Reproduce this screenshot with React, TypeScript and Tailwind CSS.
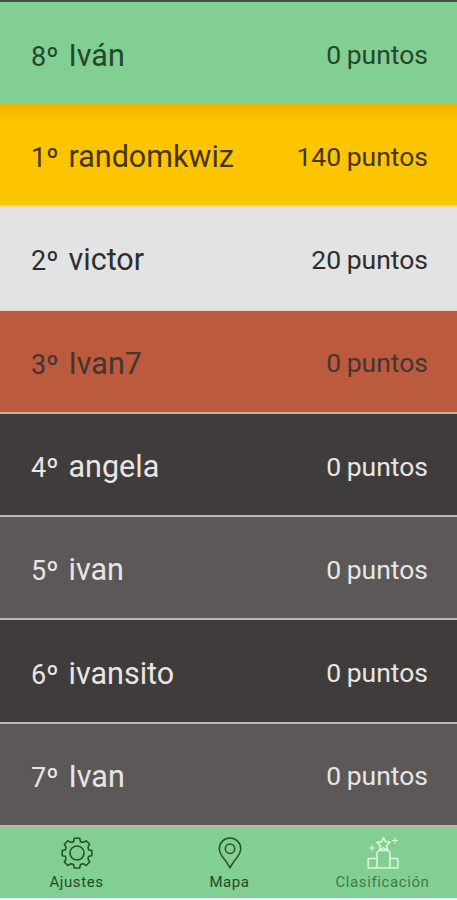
import React from 'react';
import clsx from 'clsx';

interface Player {
  rank: number;
  name: string;
  points: number;
  rowClass: string;
}

const CURRENT_PLAYER: Player = {
  rank: 8,
  name: 'Iván',
  points: 0,
  rowClass: 'bg-[#82cf93] text-[#26472b]',
};

const PLAYERS: Player[] = [
  {
    rank: 1,
    name: 'randomkwiz',
    points: 140,
    rowClass: 'border-b-[#f0dfa0] bg-[#fdc500] bg-linear-to-b from-[#eeb400] to-[#fdc500] to-20% text-[#473511]',
  },
  { rank: 2, name: 'victor', points: 20, rowClass: 'border-b-[#edd8d0] bg-[#e3e3e3] text-[#2e2e2e]' },
  { rank: 3, name: 'Ivan7', points: 0, rowClass: 'border-b-[#cdaea4] bg-[#bb5a3c] text-[#443532]' },
  { rank: 4, name: 'angela', points: 0, rowClass: 'border-b-[#bdb8b7] bg-[#403c3b] text-[#e8e6e5]' },
  { rank: 5, name: 'ivan', points: 0, rowClass: 'border-b-[#bdb8b7] bg-[#5c5857] text-[#e8e6e5]' },
  { rank: 6, name: 'ivansito', points: 0, rowClass: 'border-b-[#bdb8b7] bg-[#403c3b] text-[#e8e6e5]' },
  { rank: 7, name: 'Ivan', points: 0, rowClass: 'border-b-[#bdb8b7] bg-[#5c5857] text-[#e8e6e5]' },
];

/* ----------------------------------
   Icons
----------------------------------- */

const GearIcon = () => (
  <svg width="32" height="32" viewBox="0 0 32 32" fill="none" stroke="#26522f" strokeWidth="1.6" strokeLinejoin="round">
    <path d="M13.3 1.2h5.4l.7 3.3q1.800 1.200 3.600.6l2.200-1.400 3.500 3.500-1.400 2.300q-.6 1.800.4 3.400l3.100.6v5.200l-3.100.6q-1 1.600-.4 3.400l1.400 2.300-3.500 3.500-2.200-1.400q-1.800-.6-3.600.6l-.7 3.300h-5.400l-.7-3.300q-1.800-1.200-3.600-.6l-2.200 1.400-3.500-3.500 1.400-2.300q.6-1.800-.4-3.400l-3.100-.6v-5.200l3.100-.6q1-1.600.4-3.400L3.300 7.200l3.500-3.500L9 5.100q1.800.6 3.600-.6z" />
    <circle cx="16" cy="16" r="7" />
  </svg>
);

const PinIcon = () => (
  <svg width="24" height="32" viewBox="0 0 24 32" fill="none" stroke="#26522f" strokeWidth="1.5" strokeLinejoin="round">
    <path d="M12 31Q10.5 27.5 5 20.5 1.3 15.5 1.3 11.500a10.700 10.400 0 0 1 21.400 0Q22.7 15.5 19 20.5 13.5 27.5 12 31z" />
    <circle cx="12" cy="11.7" r="4.7" />
  </svg>
);

const PodiumIcon = () => (
  <svg width="32" height="32" viewBox="0 0 32 32" fill="none" stroke="#e0f8e1" strokeWidth="1.5" strokeLinejoin="round">
    <path d="M10 31V15.500l2-2h9l2 2V31M10 21.500H1.200V31h29.600v-9.500H23" />
    <path d="M16.500.8l2 4 4.700.5-3.500 3.200.9 4.700-4.100-2.300-4.100 2.300.9-4.700-3.500-3.200 4.700-.5z" />
    <path strokeWidth="1.1" d="M5 8v6M2 11h6M28 .5v6M25 3.500h6" />
  </svg>
);

/* ----------------------------------
   Components
----------------------------------- */

const PlayerRow: React.FC<{ player: Player; className?: string }> = ({ player, className }) => (
  <div className={clsx('flex shrink-0 items-center justify-between pt-1 pr-[29px] pl-[31px]', player.rowClass, className)}>
    <div className="flex items-baseline pt-[2px]">
      <span className="w-[37.5px] text-[27px] leading-9">{player.rank}º</span>
      <span className="text-[30.5px] leading-9">{player.name}</span>
    </div>
    <span className="text-[26.5px] leading-9 [word-spacing:-1px]">{player.points} puntos</span>
  </div>
);

const TabItem: React.FC<{ label: string; icon: React.ReactNode; active?: boolean }> = ({ label, icon, active }) => (
  <button className="flex w-[153px] shrink-0 flex-col items-center pt-[10px]">
    {icon}
    <span
      className={clsx(
        'mt-[3px] text-[15px] leading-5 tracking-[0.6px]',
        active ? 'text-[#3f7a4c]' : 'text-[#26472b]',
      )}
    >
      {label}
    </span>
  </button>
);

export default function App() {
  return (
    <div className="flex h-[900px] w-[457px] flex-col overflow-hidden bg-[#eefaf0] font-['Roboto',sans-serif]">
      <div className="h-[2px] shrink-0 bg-[#40513f]" />
      <PlayerRow player={CURRENT_PLAYER} className="h-[102px]" />

      <div className="flex flex-col">
        {PLAYERS.map((player) => (
          <PlayerRow key={player.rank} player={player} className="h-[103.3px] border-b-2" />
        ))}
      </div>

      <nav className="flex h-[71px] shrink-0 overflow-hidden bg-[#82cf93]">
        <TabItem label="Ajustes" icon={<GearIcon />} />
        <TabItem label="Mapa" icon={<PinIcon />} />
        <TabItem label="Clasificación" icon={<PodiumIcon />} active />
      </nav>
    </div>
  );
}
